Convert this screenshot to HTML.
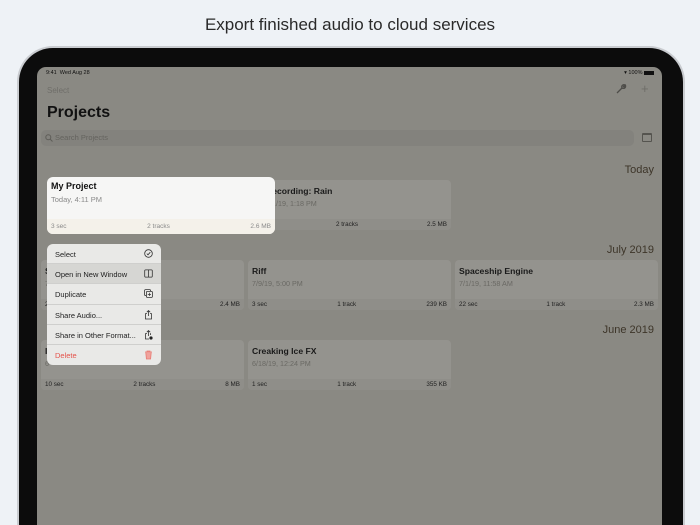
<!DOCTYPE html>
<html style="width:700px;height:525px;overflow:hidden"><head><style>
*{margin:0;padding:0;box-sizing:border-box}
body{width:700px;height:525px;background:#eef2f6;font-family:"Liberation Sans",sans-serif;position:relative;overflow:hidden}
.title{position:absolute;top:15px;left:0;width:700px;text-align:center;font-size:17px;color:#2a2a2a}
.frame{position:absolute;left:17px;top:46px;width:668px;height:479px;border-radius:36px 36px 0 0;background:#0c0c0c;border:2px solid #c9ccd0;border-bottom:none}
.screen{position:absolute;left:37px;top:67px;width:625px;height:458px;border-radius:9px 9px 0 0;background:#8a8983;overflow:hidden}
.abs{position:absolute}
.card{position:absolute;width:203px;height:50px;background:#94938e;border-radius:4px;overflow:hidden}
.card .n{position:absolute;left:4px;top:6px;font-size:8.6px;font-weight:bold;color:#1a1a1a}
.card .d{position:absolute;left:4px;top:19px;font-size:7.2px;color:#6a6964}
.card .f{position:absolute;left:0;bottom:0;width:100%;height:11px;background:#8f8e89;font-size:6.3px;color:#222;display:flex;justify-content:space-between;padding:2px 4px 0}
.sec{position:absolute;right:8px;font-size:11px;color:#3d3529}
.menu{position:absolute;left:10px;top:177px;width:114px;height:121px;background:#e9e9e7;border-radius:6px;overflow:hidden}
.mi{height:20.2px;border-bottom:1px solid #cfcfcd;font-size:7.5px;color:#222;padding:6px 8px 0;position:relative}
.mi svg{position:absolute;right:8px;top:5px}
</style></head><body>
<div class="title">Export finished audio to cloud services</div>
<div class="frame"></div>
<div class="screen">
 <div class="abs" style="left:9px;top:3px;font-size:5.5px;color:#111">9:41&nbsp;&nbsp;Wed Aug 28</div>
 <div class="abs" style="right:8px;top:3px;font-size:5.5px;color:#111">▾ 100% <span style="display:inline-block;width:10px;height:4px;background:#111;vertical-align:middle"></span></div>
 <div class="abs" style="left:10px;top:19px;font-size:8px;color:#6f6e69">Select</div>
 <svg class="abs" style="left:578px;top:16px" width="12" height="12" viewBox="0 0 12 12"><path d="M2 10 L7 5 M7 5 C6 3 8 1 10 2 L8.5 3.5 L9 4 L10.5 2.5 C11 5 9 6 7 5" stroke="#4e4d49" stroke-width="1.3" fill="none"/></svg>
 <div class="abs" style="left:604px;top:14px;font-size:13px;color:#6f6e69">+</div>
 <div class="abs" style="left:10px;top:37px;font-size:16px;font-weight:bold;color:#111">Projects</div>
 <div class="abs" style="left:4px;top:63px;width:593px;height:16px;border-radius:5px;background:#83827d"></div>
 <svg class="abs" style="left:8px;top:67px" width="8" height="8" viewBox="0 0 8 8"><circle cx="3.3" cy="3.3" r="2.5" stroke="#5e5d58" fill="none"/><path d="M5 5 L7.5 7.5" stroke="#5e5d58"/></svg>
 <div class="abs" style="left:18px;top:66px;font-size:7.5px;color:#64635e">Search Projects</div>
 <div class="abs" style="left:605px;top:66px;width:10px;height:9px;border:1px solid #55544f;border-top-width:2px;border-radius:1px"></div>
 <div class="sec" style="top:97px">Today</div>
 <div class="card" style="left:211px;top:113px"><div class="n" style="left:18px">Recording: Rain</div><div class="d" style="left:18px">7/1/19, 1:18 PM</div><div class="f"><span>3 sec</span><span>2 tracks</span><span>2.5 MB</span></div></div>
 <div class="sec" style="top:177px">July 2019</div>
 <div class="card" style="left:4px;top:193px"><div class="n">S</div><div class="d">7</div><div class="f"><span>2</span><span></span><span>2.4 MB</span></div></div>
 <div class="card" style="left:211px;top:193px"><div class="n">Riff</div><div class="d">7/9/19, 5:00 PM</div><div class="f"><span>3 sec</span><span>1 track</span><span>239 KB</span></div></div>
 <div class="card" style="left:418px;top:193px"><div class="n">Spaceship Engine</div><div class="d">7/1/19, 11:58 AM</div><div class="f"><span>22 sec</span><span>1 track</span><span>2.3 MB</span></div></div>
 <div class="sec" style="top:257px">June 2019</div>
 <div class="card" style="left:4px;top:273px"><div class="n">I</div><div class="d">6</div><div class="f"><span>10 sec</span><span>2 tracks</span><span>8 MB</span></div></div>
 <div class="card" style="left:211px;top:273px"><div class="n">Creaking Ice FX</div><div class="d">6/18/19, 12:24 PM</div><div class="f"><span>1 sec</span><span>1 track</span><span>355 KB</span></div></div>
 <div class="abs" style="left:10px;top:110px;width:228px;height:57px;background:#f6f6f5;border-radius:6px;overflow:hidden">
  <div class="abs" style="left:4px;top:4px;font-size:9px;font-weight:bold;color:#111">My Project</div>
  <div class="abs" style="left:4px;top:18px;font-size:7.5px;color:#8a8a8a">Today, 4:11 PM</div>
  <div class="abs" style="left:0;bottom:0;width:100%;height:15px;background:#f4f1ea;font-size:6.5px;color:#8a8a8a;display:flex;justify-content:space-between;padding:4px 4px 0"><span>3 sec</span><span>2 tracks</span><span>2.6 MB</span></div>
 </div>
 <div class="menu">
  <div class="mi">Select<svg width="9" height="9" viewBox="0 0 9 9"><circle cx="4.5" cy="4.5" r="3.8" stroke="#333" fill="none" stroke-width=".8"/><path d="M2.8 4.6 L4 5.8 L6.3 3.2" stroke="#333" fill="none" stroke-width=".8"/></svg></div>
  <div class="mi" style="background:#d6d6d3">Open in New Window<svg width="9" height="9" viewBox="0 0 9 9"><rect x=".7" y=".9" width="7.6" height="7.2" rx="1" stroke="#333" fill="none" stroke-width=".8"/><path d="M4.5 1 V8" stroke="#333" stroke-width=".8"/></svg></div>
  <div class="mi">Duplicate<svg width="9" height="9" viewBox="0 0 9 9"><rect x=".6" y=".6" width="6" height="6" rx="1" stroke="#333" fill="none" stroke-width=".8"/><rect x="2.4" y="2.4" width="6" height="6" rx="1" stroke="#333" fill="#e9e9e7" stroke-width=".8"/><path d="M5.4 3.8 V7 M3.8 5.4 H7" stroke="#333" stroke-width=".7"/></svg></div>
  <div class="mi">Share Audio...<svg width="9" height="10" viewBox="0 0 9 10"><path d="M3 3.6 H1.5 V9 H7.5 V3.6 H6 M4.5 0.6 V6 M2.8 2.2 L4.5 0.6 L6.2 2.2" stroke="#333" fill="none" stroke-width=".8"/></svg></div>
  <div class="mi">Share in Other Format...<svg width="9" height="10" viewBox="0 0 9 10"><path d="M3 3.6 H1.5 V9 H5 M6.5 5 V3.6 H6 M4.5 0.6 V6 M2.8 2.2 L4.5 0.6 L6.2 2.2" stroke="#333" fill="none" stroke-width=".8"/><circle cx="7" cy="8" r="1.6" fill="#222"/></svg></div>
  <div class="mi" style="border:none;color:#e5534b">Delete<svg width="9" height="10" viewBox="0 0 9 10"><path d="M1 2 H8 M3 2 V1 H6 V2 M1.8 2.5 L2.4 9 H6.6 L7.2 2.5" stroke="#e87b73" fill="#f0a29c" stroke-width=".8"/></svg></div>
 </div>
</div>
</body></html>
